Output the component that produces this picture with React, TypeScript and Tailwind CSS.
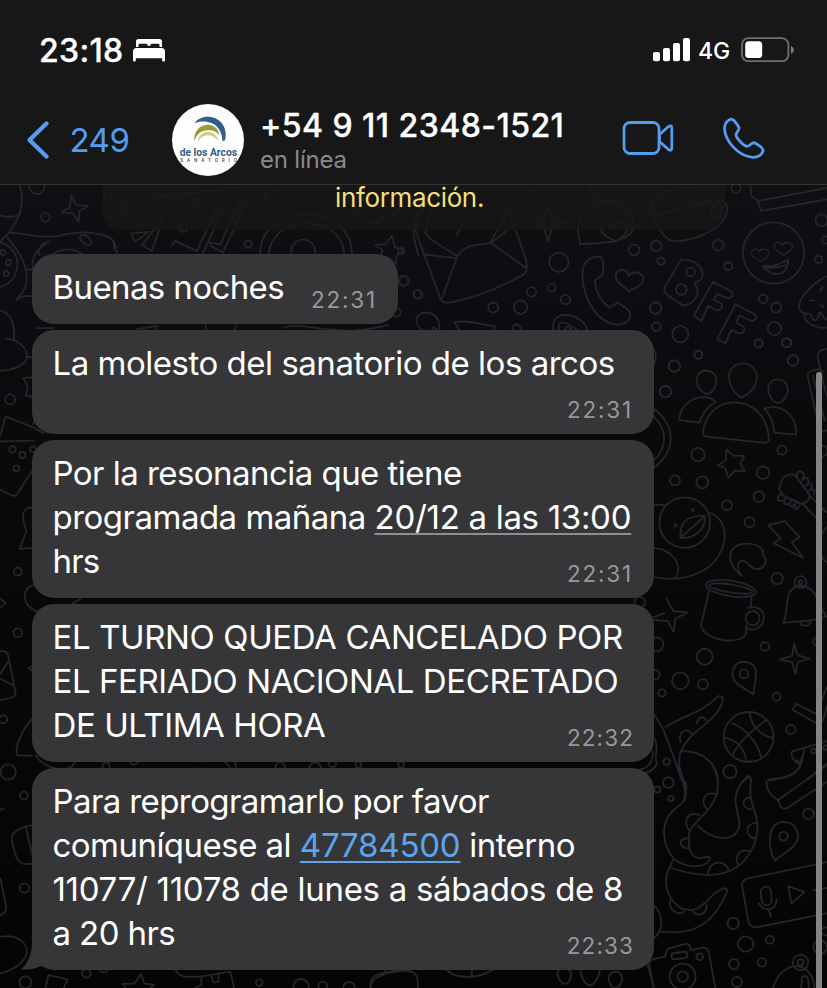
import React from 'react';

type Dot = [number, number, number];

const Dots: React.FC<{ items: Dot[] }> = ({ items }) => (
    <>
        {items.map(([x, y, r], i) => (
            <circle key={i} cx={x} cy={y} r={r} />
        ))}
    </>
);

const HEART = 'M0 30 C-14 16 -40 8 -40 -12 C-38 -34 -8 -36 -4 -14 C8 -34 42 -24 38 -2 C32 14 14 18 0 30Z';

// Doodle wallpaper. Every group is drawn on its own 3x grid.
const Wallpaper: React.FC = () => (
    <svg className="absolute inset-0 w-full h-full" viewBox="0 184 827 804" fill="none" stroke="#26262a" strokeWidth="5.4" strokeLinecap="round" strokeLinejoin="round">
        {/* Top left */}
        <g transform="translate(0 180) scale(.33333)">
            <path d="M52 0 C78 50 62 130 0 180 M0 104 C25 110 45 108 60 98 M28 155 C75 155 110 175 175 165 C230 150 290 150 335 175 C350 190 345 205 350 222 M20 170 C60 215 95 270 72 325 C60 345 52 345 48 358 C65 345 80 342 98 348 M0 185 C35 195 55 225 50 260 C45 290 25 310 0 318" />
            <path d="M85 14 C90 45 130 50 133 14" />
            <path d="M213 42 L227 72 L263 75 L237 90 L235 122 L217 97 L184 94 L208 78Z" />
            <path d="M98 268 C90 230 110 200 150 180 M118 222 C112 200 122 188 140 185 M80 265 L98 268 M155 222 C180 200 220 200 245 220" />
            <ellipse cx="256" cy="177" rx="20" ry="11" transform="rotate(38 256 177)" />
            <path d="M302 160 C330 165 345 180 340 205" />
            <path d="M392 158 L445 152 L405 182Z M488 112 L455 210 L425 192Z" />
            <path d="M515 192 L525 180 L590 210 L650 80 L668 85 L605 222 M628 185 L660 190 L720 60 L738 65 L668 215 L632 195Z" />
            <path d="M780 222 C778 60 1055 60 1056 222 M806 222 C812 95 1030 95 1032 222" />
            <circle cx="909" cy="212" r="36" />
            <path d="M1175 165 L1186 200 L1212 207 L1190 225 L1188 248 L1160 228 L1140 232 L1148 207 L1126 192 L1156 190Z" />
            <path d="M460 14 L468 48 L690 22 L740 14 M790 30 L797 66 L806 35 L838 25 M1050 60 C1060 110 1120 150 1150 105 C1180 110 1200 90 1200 60" />
            <path d="M1258 118 C1225 150 1250 190 1255 225 M410 445 L470 435 L465 450 M0 390 C30 395 45 430 40 478 M110 442 L160 442" />
            <Dots items={[[135, 109, 13], [744, 190, 11], [322, 48, 12], [378, 82, 15], [415, 28, 10], [590, 68, 11], [549, 140, 13], [1210, 300, 15], [1252, 340, 12], [1190, 395, 12], [7, 215, 8], [24, 245, 8], [17, 278, 8]]} />
            <path d="M615 432 L620 450 M710 432 L700 450 M850 440 C900 425 950 450 1060 450 C1110 445 1145 438 1165 432" />
        </g>

        {/* Top right */}
        <g transform="translate(400 180) scale(.33333)">
            <path d="M40 130 L118 345 C122 362 130 366 150 365 C230 350 300 320 370 282 C385 270 382 250 378 235 L320 70 M40 130 C45 100 80 60 130 40 M70 220 L170 232 L124 358 M76 155 C90 180 140 205 172 225 C200 185 240 195 272 185 L380 262 M272 185 L330 75 M76 155 L92 80 M276 184 L345 130" />
            <path d="M140 120 L155 90 M155 135 L175 100 M170 162 L195 120" />
            <path d="M446 75 L458 115 L494 125 L458 138 L444 180 L433 140 L398 125 L433 115Z" />
            <path d="M540 180 C520 110 560 60 620 60 C690 60 720 130 690 160 C650 190 600 185 540 190Z" />
            <path d={HEART} transform="translate(645 153) rotate(-6)" />
            <path d="M755 100 C740 60 790 25 860 20 C930 20 950 50 935 60 L760 105 C770 140 800 178 820 180 C870 185 960 150 978 105 C990 70 975 55 955 62 C940 70 932 95 935 105 C945 115 965 108 966 80" />
            <path d="M1053 14 L1055 45 L1076 60 L1285 20 M1076 62 L1084 90 L1285 55" />
            <circle cx="1122" cy="216" r="92" />
            <path d={HEART} transform="translate(1083 222) scale(.66) rotate(-8)" />
            <path d={HEART} transform="translate(1152 203) scale(.7) rotate(-4)" />
            <path d="M1090 255 C1125 258 1145 248 1166 236 C1165 290 1115 290 1090 255Z M1100 262 C1125 262 1145 258 1164 252" />
            <path d="M548 285 C545 245 570 225 600 228 C610 230 612 240 610 280 L585 300 C590 340 605 365 630 380 L655 364 L688 390 C697 410 685 430 650 432 C590 425 550 350 548 285Z" />
            <path d={HEART} transform="translate(690 300) scale(1.07) rotate(4)" />
            <path d="M845 236 C890 235 920 265 905 295 C895 305 885 300 885 310 C905 330 890 370 850 374 L800 340 C792 332 792 325 797 315Z" />
            <circle cx="873" cy="273" r="13" /><circle cx="845" cy="326" r="16" />
            <path d="M940 303 L995 332 C1004 340 998 352 985 352 L952 340 L942 356 L965 368 C972 380 962 394 945 385 L925 375 L905 420 L882 405Z M1008 370 L1065 400 C1075 410 1065 424 1052 420 L1020 403 L1010 425 L1032 438 C1038 450 1030 462 1015 456 L995 448 L978 488 L953 475Z" />
            <path d="M1285 285 C1250 300 1190 350 1200 385 C1210 405 1235 395 1235 402 C1240 425 1255 425 1260 395 C1270 395 1270 420 1285 415 M1215 400 C1210 425 1250 445 1285 440 M1232 358 L1245 360 M1262 330 L1270 318 M1262 372 L1272 378" />
            <path d="M72 450 C40 435 40 395 80 395 C110 398 120 420 118 450 M95 450 C98 435 105 440 112 450 M163 425 C200 415 245 432 287 437 L280 450 M163 425 L180 450 M460 450 C455 410 480 395 515 405 C550 415 565 440 560 450 M478 450 C470 420 490 412 535 450 M495 450 C500 430 510 435 515 450" />
            <Dots items={[[477, 244, 29], [395, 333, 14], [456, 321, 12], [497, 356, 14], [280, 380, 15], [362, 379, 20], [350, 443, 12], [703, 207, 16], [770, 195, 16], [784, 241, 11], [956, 193, 16], [986, 256, 12], [1009, 22, 14], [1266, 118, 18], [1257, 236, 11], [1278, 177, 11], [768, 382, 17], [770, 438, 13], [842, 460, 24], [1091, 354, 13], [1130, 380, 15], [1125, 443, 20], [1077, 488, 12], [1161, 486, 14], [1181, 539, 16], [896, 522, 12], [824, 556, 17], [797, 632, 17], [12, 300, 14], [54, 341, 13], [3, 210, 9]]} />
            <path d="M363 14 C385 35 410 32 420 14 M570 14 C580 55 610 50 622 14" />
        </g>

        {/* Right middle */}
        <g transform="translate(640 340) scale(.33333)">
            <path d="M200 90 C220 90 232 105 230 125 C225 150 210 162 200 160 C180 150 170 135 171 115 C172 100 185 90 200 90Z M310 68 C340 68 355 95 352 115 C345 145 325 165 305 170 C285 160 268 135 268 105 C270 80 290 68 310 68Z M415 116 C435 117 446 132 445 150 C440 175 425 188 412 187 C395 178 385 160 386 142 C388 125 400 116 415 116Z" />
            <path d="M190 282 C195 150 385 150 388 300 C385 307 380 307 370 306 L200 288Z M119 238 C120 180 190 150 228 182 C200 200 190 220 178 246Z M374 204 C430 185 475 230 469 282 L405 276 C400 245 395 225 374 204Z" />
            <path d="M261 326 L280 345 L314 346 L302 370 L316 392 L285 390 L266 411 L257 382 L234 374 L258 360Z" />
            <path d="M42 205 C110 255 110 330 42 382 M42 228 C82 265 85 320 42 360 M42 28 C52 40 50 60 42 72" />
            <circle cx="135" cy="546" r="76" />
            <path d="M42 493 L74 493 M210 517 C280 540 265 650 190 690 C145 715 90 720 42 710 M42 622 C105 628 130 680 108 710 M122 592 C120 545 140 525 195 525 C200 570 160 595 122 592Z M122 592 L195 527" />
            <circle cx="160" cy="508" r="3" /><circle cx="108" cy="554" r="3" />
            <path d="M386 554 L436 542 L480 590 L457 605 L491 652 L402 608 L424 594Z" />
            <path d="M306 706 C260 670 260 620 310 610 C345 605 375 620 370 645 C385 655 380 685 350 686 C330 685 330 665 312 660 C285 660 295 690 306 706Z" />
            <path d="M418 445 L430 412 C445 400 460 398 470 408 L510 462 C512 475 500 490 485 490 L432 465Z M510 465 L561 515 M490 490 L548 550 M561 560 C530 590 530 640 561 665" />
            <path d="M472 408 C470 390 485 388 494 400 L488 420 M488 420 C495 405 512 410 505 432 M498 435 C510 420 522 430 515 448 M508 450 C520 440 530 448 522 462 M425 460 C408 470 412 485 428 480 M440 470 C428 485 435 498 448 488 M455 478 C445 495 455 505 465 492 M470 484 C458 505 470 515 480 494" />
            <path d="M561 25 C535 25 530 45 538 65 L561 165 M505 110 C500 90 540 80 548 92 M505 110 L540 265 C545 275 555 270 561 270 M520 105 L555 238" />
            <Dots items={[[104, 76, 17], [176, 42, 12], [77, 153, 17], [461, 59, 16], [357, 8, 12], [441, 6, 13], [175, 342, 20], [427, 328, 14], [548, 331, 16], [370, 396, 19], [188, 425, 18], [106, 419, 15], [358, 468, 16], [262, 494, 15], [330, 545, 15]]} />
        </g>

        {/* Right lower */}
        <g transform="translate(640 560) scale(.33333)">
            <ellipse cx="274" cy="84" rx="76" ry="23" transform="rotate(9 274 84)" />
            <ellipse cx="274" cy="84" rx="66" ry="12" transform="rotate(9 274 84)" />
            <path d="M208 92 L184 195 C190 240 310 260 320 215 L320 195 M336 112 L334 140 M325 142 C390 125 385 215 330 207 L318 200" />
            <circle cx="339" cy="173" r="21" />
            <path d="M79 112 L101 152 L143 156 L107 175 L102 214 L84 182 L42 178 M42 170 L75 158Z" />
            <path d="M464 250 L474 284 L510 295 L475 305 L468 340 L458 306 L422 297 L458 286Z" />
            <path d="M432 187 C450 140 430 85 480 75 C540 80 530 130 561 168 C520 185 480 180 432 187Z M482 184 C482 200 510 200 514 182" />
            <circle cx="483" cy="65" r="18" /><circle cx="483" cy="65" r="6" />
            <path d="M341 402 L295 372 C265 345 280 304 315 304 C350 308 350 330 349 350Z" />
            <circle cx="313" cy="340" r="13" />
            <circle cx="327" cy="530" r="75" />
            <path d="M277 488 C330 510 360 560 365 595 M330 457 C335 500 365 525 398 533 M380 480 C325 515 290 560 278 585 M255 532 C290 540 315 560 320 603" />
            <path d="M42 460 L70 505 L128 660 M78 500 C130 465 185 460 235 408 C255 405 250 420 245 435 C220 490 150 510 122 575 C115 610 120 640 130 660 M125 573 C190 570 230 610 235 660" />
            <path d="M122 545 C115 510 145 500 158 522 M172 490 C172 470 195 465 200 480" />
            <path d="M470 430 L532 462 L561 380 M470 430 L460 448 L535 492 C550 490 555 470 561 440 M561 543 L458 573 C450 585 465 605 480 612 L495 570 M490 590 C480 650 430 655 390 660 M561 610 L500 660 M315 660 L330 648 L335 660" />
            <path d="M45 535 C60 560 40 590 52 610 C45 630 20 640 5 640 M38 570 C45 600 25 625 0 628" />
            <Dots items={[[413, 54, 17], [0, 125, 16], [50, 252, 21], [195, 289, 24], [122, 361, 25], [190, 372, 15], [67, 398, 11], [45, 343, 15], [376, 258, 13], [411, 409, 12], [454, 508, 14], [533, 243, 12], [81, 604, 10], [522, 572, 7], [558, 562, 7]]} />
        </g>

        {/* Tentacles, recorder and camera */}
        <g transform="translate(640 760) scale(.33333)">
            <path d="M105 0 C125 60 155 105 120 135 C50 180 70 260 105 298 C140 325 195 325 210 300 C215 285 195 290 185 294 C150 295 145 260 148 220 C160 180 215 160 232 100 C240 60 230 20 205 0" />
            <path d="M175 197 C230 250 300 245 300 185 C285 130 275 90 325 48 C345 50 325 80 335 120 C345 160 365 190 345 250 C310 340 230 370 90 322 C70 360 75 410 125 445 C190 470 200 400 255 384 C270 388 260 400 250 420 C220 480 170 530 62 514 M100 298 L90 322 M42 435 C70 460 75 510 42 535" />
            <path d="M118 10 C122 50 150 80 135 122 M122 55 C140 60 145 80 138 95 M232 102 C190 90 180 130 205 150 M180 165 C140 150 130 190 148 210 M148 235 C115 230 115 265 148 265 M330 112 C305 115 305 145 336 147 M350 188 C315 190 315 230 348 236 M333 275 C300 260 285 290 295 312 M205 340 C210 295 265 300 268 335 M92 420 C85 455 120 465 132 455 M160 455 C175 470 205 465 200 432" />
            <path d="M472 0 L485 12 C465 65 380 50 380 65 C380 90 400 110 415 120 L561 15 M415 120 L425 142 C435 148 440 145 448 140 L561 65 M300 0 C315 5 335 5 355 0" />
            <path d="M406 301 C385 265 380 190 430 185 C470 185 485 225 468 250 C450 275 430 280 406 301Z" />
            <circle cx="432" cy="228" r="13" />
            <path d="M561 306 L325 355 C310 360 305 370 308 382 L328 490 C335 502 345 503 355 501 L561 460" />
            <rect x="365" y="380" width="30" height="55" rx="15" transform="rotate(-6 380 407)" />
            <path d="M358 430 C370 455 410 455 411 418 M386 448 L395 470 M446 378 L495 396 L456 430Z M522 390 L561 384" />
            <path d="M42 684 L28 610 C30 600 38 598 48 596 L76 590 C80 570 80 568 90 564 L140 551 C152 552 150 560 154 570 L190 563 C202 563 206 570 208 578 L227 684" />
            <rect x="95" y="577" width="48" height="19" rx="9" transform="rotate(-7 119 586)" />
            <circle cx="129" cy="650" r="39" /><circle cx="129" cy="650" r="16" /><circle cx="180" cy="590" r="10" />
            <path d="M400 684 C415 640 440 620 470 618 C500 618 525 650 525 684 M485 684 L487 655 C490 645 505 645 506 660 L508 684" />
            <circle cx="483" cy="607" r="23" /><circle cx="483" cy="607" r="9" />
            <Dots items={[[271, 34, 20], [86, 67, 16], [53, 88, 9], [94, 115, 8], [507, 161, 16], [281, 490, 17], [318, 552, 23], [391, 539, 12], [283, 612, 15], [367, 607, 13], [292, 666, 15], [542, 561, 20], [558, 514, 12]]} />
        </g>

        {/* Left edge */}
        <g transform="translate(0 330) scale(.33333)">
            <path d="M40 0 L40 24 M15 24 C60 25 85 60 78 85 C70 105 40 118 0 120 M78 80 L98 78" />
            <path d="M98 140 L68 142 L82 168 L76 195 L98 198" />
            <path d="M0 312 L15 258 L98 290 L130 308 M0 332 L100 330 M98 280 L106 262 M0 478 L40 497 L50 490 L100 412" />
            <path d="M98 530 C65 530 60 555 78 600 L58 655 L98 652 M98 764 C60 775 65 830 115 845 M0 805 L16 818 L0 830 M0 962 C15 960 22 968 24 980 L46 1090 C45 1100 40 1100 0 1110 M0 1030 L22 995 M0 1045 L38 1065 M98 1005 L84 1014 L98 1022" />
            <path d="M98 1162 C70 1190 40 1250 50 1275 L95 1276 M215 820 L240 805" />
            <Dots items={[[29, 206, 15], [36, 356, 10], [66, 373, 9], [98, 356, 9], [48, 413, 9], [52, 723, 12], [52, 907, 13], [8, 1167, 12]]} />
        </g>

        {/* Bottom left */}
        <g transform="translate(0 740) scale(.33333)">
            <path d="M105 45 C130 90 215 100 222 66 M98 255 C60 260 30 275 34 300 C45 350 50 370 75 372 L98 370 M76 262 L98 355 M0 415 L17 500 C18 515 10 520 0 525 M0 590 C60 580 90 620 75 650 C60 675 30 695 0 700 M0 208 L10 206" />
            <path d="M144 705 L202 718 L190 744 M144 705 L135 744 M422 702 L432 730 L462 735 L450 744 M422 702 L403 730 L367 732 L375 744 M525 690 C540 715 560 710 600 710 L690 695 L702 744 M603 712 L603 735 L585 744 M632 705 L640 728 L655 725 L655 700 M1112 744 C1110 710 1160 695 1230 690 M675 66 C690 85 685 66 688 84 M705 66 L708 84 M545 88 L600 84" />
            <Dots items={[[23, 95, 23], [70, 166, 12], [72, 444, 14], [75, 727, 18], [258, 700, 13], [317, 77, 11], [400, 62, 11], [840, 80, 14], [945, 85, 18], [997, 70, 11], [1075, 73, 9], [1203, 73, 9], [777, 728, 10], [903, 740, 23], [968, 738, 13], [1047, 744, 18], [310, 685, 12]]} />
        </g>
        <g transform="translate(130 960) scale(.33784)">
            <path d="M712 82 C705 50 730 38 780 32 C840 28 855 35 852 82 M750 20 L755 34 M930 20 C955 60 1040 60 1085 20 M1012 30 L1012 50 M1530 5 L1552 82" />
            <path d="M1265 40 C1268 20 1305 20 1307 45 C1300 80 1275 80 1265 40Z M1332 20 C1335 55 1350 75 1362 75 C1380 70 1392 45 1392 20 M1417 55 C1420 25 1460 30 1458 58 C1445 95 1425 90 1417 55Z" />
        </g>
    </svg>
);

const BedIcon: React.FC = () => (
    <svg className="w-8 h-6" viewBox="0 0 32 24" fill="#fff">
        <path d="M3 9 V3.5 Q3 1 5.5 1 H26.5 Q29 1 29 3.5 V9 H26.5 V7.2 Q26.5 5.8 25 5.8 H19 Q17.5 5.8 17.5 7 V7.8 H14.5 V7 Q14.5 5.8 13 5.8 H7 Q5.5 5.8 5.5 7.2 V9Z" />
        <path d="M0 22.5 V13.5 Q0 10 3.5 10 H28.5 Q32 10 32 13.5 V22.5 Q32 23.4 31 23.4 H30 Q29.2 23.4 29.2 22.5 V20.3 H2.8 V22.5 Q2.8 23.4 2 23.4 H1 Q0 23.4 0 22.5Z" />
    </svg>
);

const SignalIcon: React.FC = () => (
    <svg className="w-[38px] h-6" viewBox="0 0 38 24" fill="#fff">
        <rect x="0" y="14" width="7" height="9.2" rx="2" />
        <rect x="10" y="10" width="7" height="13.2" rx="2" />
        <rect x="20" y="5" width="7" height="18.2" rx="2" />
        <rect x="30" y="0" width="7" height="23.2" rx="2" />
    </svg>
);

const BatteryIcon: React.FC = () => (
    <svg className="w-[54px] h-[26px]" viewBox="0 0 54 26" fill="none">
        <rect x="1" y="1.2" width="46.4" height="23" rx="6.5" stroke="#6f6f71" strokeWidth="1.8" />
        <rect x="4.2" y="4.3" width="17" height="16.8" rx="3.5" fill="#fff" />
        <path d="M50 9 Q53 10.5 53 12.9 Q53 15.5 50 17Z" fill="#7b7b7d" />
    </svg>
);

const Avatar: React.FC = () => (
    <svg className="w-[72px] h-[72px]" viewBox="0 0 216 216">
        <circle cx="108" cy="108" r="108" fill="#fdfdfd" />
        <path d="M68 57 C80 42 98 37 116 39 C152 44 168 80 159 109 L151 112 C151 84 138 60 108 54 C92 51 78 53 68 57Z" fill="#2f5d8c" />
        <path d="M67 111 C64 82 84 62 108 62 C128 63 141 78 143 93 C131 81 120 77 107 79 C86 80 74 92 67 111Z" fill="#9c9a35" />
        <path d="M78 113 C78 96 91 83 108 83 C125 84 137 96 140 111 C130 100 120 94 109 94 C95 94 84 101 78 113Z" fill="#cfcb8e" />
        <text x="23" y="157" textLength="172" lengthAdjust="spacingAndGlyphs" fill="#2f5d86" fontFamily="Roboto, sans-serif" fontWeight="700" fontSize="30">de los Arcos</text>
        <text x="25" y="175" textLength="170" fill="#4b4e52" fontFamily="Roboto, sans-serif" fontWeight="500" fontSize="14">SANATORIO</text>
    </svg>
);

const Time: React.FC<{ children: string }> = ({ children }) => (
    <span className={`absolute bottom-[9px] text-[22.5px] leading-[30px] text-[#98989c] ${children.endsWith('1') ? 'right-[21px] tracking-[1.8px]' : 'right-[20px] tracking-[1.1px]'}`}>{children}</span>
);

const Bubble: React.FC<{ time: string; className: string; children: React.ReactNode }> = ({ time, className, children }) => (
    <div className={`relative rounded-[22px] bg-[#363638] pl-[20.5px] text-[33px] leading-[44px] text-white whitespace-nowrap ${className}`}>
        {children}
        <Time>{time}</Time>
    </div>
);

const App: React.FC = () => {
    return (
        <div className="w-[827px] h-[988px] overflow-hidden flex flex-col bg-[#171717] font-['Inter',sans-serif] text-white">
            <div className="h-[100px] shrink-0 flex items-center justify-between pl-[39px] pr-[32px]">
                <div className="flex items-center">
                    <span className="w-[94px] pt-[2px] text-[32px] leading-10 font-medium tracking-[0.3px] [-webkit-text-stroke:0.35px_#fff]">23:18</span>
                    <BedIcon />
                </div>
                <div className="flex items-center">
                    <SignalIcon />
                    <span className="ml-[7px] w-[43px] pt-px text-[23px] leading-8 font-medium">4G</span>
                    <BatteryIcon />
                </div>
            </div>

            <div className="h-[85px] shrink-0 flex items-start border-b border-[#343436] pl-[26px]">
                <svg className="mt-[20px] w-6 h-10" viewBox="0 0 24 40" fill="none" stroke="#549bf2" strokeWidth="4.4" strokeLinecap="round" strokeLinejoin="round">
                    <path d="M20.5 3.5 L3.5 20 L20.5 36.5" />
                </svg>
                <span className="ml-[19.5px] mt-5 w-[102.5px] text-[33px] leading-10 tracking-[-0.5px] text-[#549bf2]">249</span>
                <div className="mt-1">
                    <Avatar />
                </div>
                <div className="ml-4 mt-[6px] w-[362px] whitespace-nowrap">
                    <div className="text-[32px] leading-[39px] font-medium tracking-[0.45px] [-webkit-text-stroke:0.35px_#fff]">+54 9 11 2348-1521</div>
                    <div className="text-[24px] leading-[30px] tracking-[-0.2px] text-[#8a8a8e]">en línea</div>
                </div>
                <svg className="mt-5 w-[52px] h-9" viewBox="0 0 52 36" fill="none" stroke="#549bf2" strokeWidth="2.8" strokeLinejoin="round">
                    <rect x="2" y="2.5" width="35" height="31" rx="6" />
                    <path d="M37.5 14.5 L46.5 6.5 Q49.8 4.5 49.8 8 V28 Q49.8 31.5 46.5 29.5 L37.5 21.5Z" />
                </svg>
                <svg className="ml-[49px] mt-[17px] w-[42px] h-[42px]" viewBox="0 0 42 42" fill="none" stroke="#549bf2" strokeWidth="2.8" strokeLinejoin="round">
                    <path d="M7 2.4 C9.5 1.4 11.5 3.2 15.8 10.2 C17.2 12.6 13 15.3 13 18 C13.5 21.5 20.5 28.5 24 29.3 C27 29.5 28.5 25.3 31.5 25.8 C35.5 28 40.6 30.8 40 34 C38.5 38.5 34 40.7 28.5 40.2 C15 38.5 2 24 1.5 11.5 C1.5 7 4 3.8 7 2.4Z" />
                </svg>
            </div>

            <div className="relative flex-1 bg-linear-to-b from-[#100f14] via-[#0a0a0d] via-30% to-[#050507]">
                <Wallpaper />
                <div className="relative flex flex-col items-start gap-[6px] pl-8">
                    <div className="ml-[71px] mb-[18px] w-[622px] h-[45px] rounded-b-[18px] bg-[#181818]/80 pr-[9px] text-center text-[26px] leading-[26px] tracking-[-0.35px] text-[#f3df78]">
                        información.
                    </div>
                    <Bubble time="22:31" className="w-[366px] h-[70px] pt-[11px]">
                        <div className="tracking-[-0.6px]">Buenas noches</div>
                    </Bubble>
                    <Bubble time="22:31" className="w-[622px] h-[104px] pt-[11px]">
                        <div className="tracking-[-0.48px]">La molesto del sanatorio de los arcos</div>
                    </Bubble>
                    <Bubble time="22:31" className="w-[622px] h-[158px] pt-[11px]">
                        <div className="tracking-[-0.54px]">Por la resonancia que tiene</div>
                        <div className="tracking-[-0.51px]">
                            programada mañana <span className="tracking-[-0.3px] underline decoration-[#8f8f91] decoration-2 underline-offset-[4px]">20/12 a las 13:00</span>
                        </div>
                        <div className="tracking-[-0.8px]">hrs</div>
                    </Bubble>
                    <Bubble time="22:32" className="w-[622px] h-[158px] pt-[11px]">
                        <div className="tracking-[-0.38px]">EL TURNO QUEDA CANCELADO POR</div>
                        <div className="tracking-[-0.41px]">EL FERIADO NACIONAL DECRETADO</div>
                        <div className="tracking-[-0.42px]">DE ULTIMA HORA</div>
                    </Bubble>
                    <Bubble time="22:33" className="w-[622px] h-[202px] pt-[11px]">
                        <svg className="absolute -left-[12px] bottom-0 w-[34px] h-[50px]" viewBox="0 0 34 50" fill="#363638">
                            <path d="M12 0 V22 C12 34 8 43 1 49.5 C10 50 18 48 22 45.5 L34 50 V0Z" />
                        </svg>
                        <div className="relative tracking-[-0.6px]">Para reprogramarlo por favor</div>
                        <div className="relative tracking-[-0.53px]">
                            comuníquese al <span className="text-[#5ca4ee] tracking-[-0.2px] underline decoration-2 underline-offset-[4px]">47784500</span> interno
                        </div>
                        <div className="relative tracking-[-0.3px]">11077/ 11078 de lunes a sábados de 8</div>
                        <div className="relative tracking-[-0.6px]">a 20 hrs</div>
                    </Bubble>
                </div>
                <div className="absolute right-[5px] top-[187px] bottom-0 w-[6px] rounded-t-full bg-[#848486]" />
            </div>
        </div>
    );
};

export default App;
